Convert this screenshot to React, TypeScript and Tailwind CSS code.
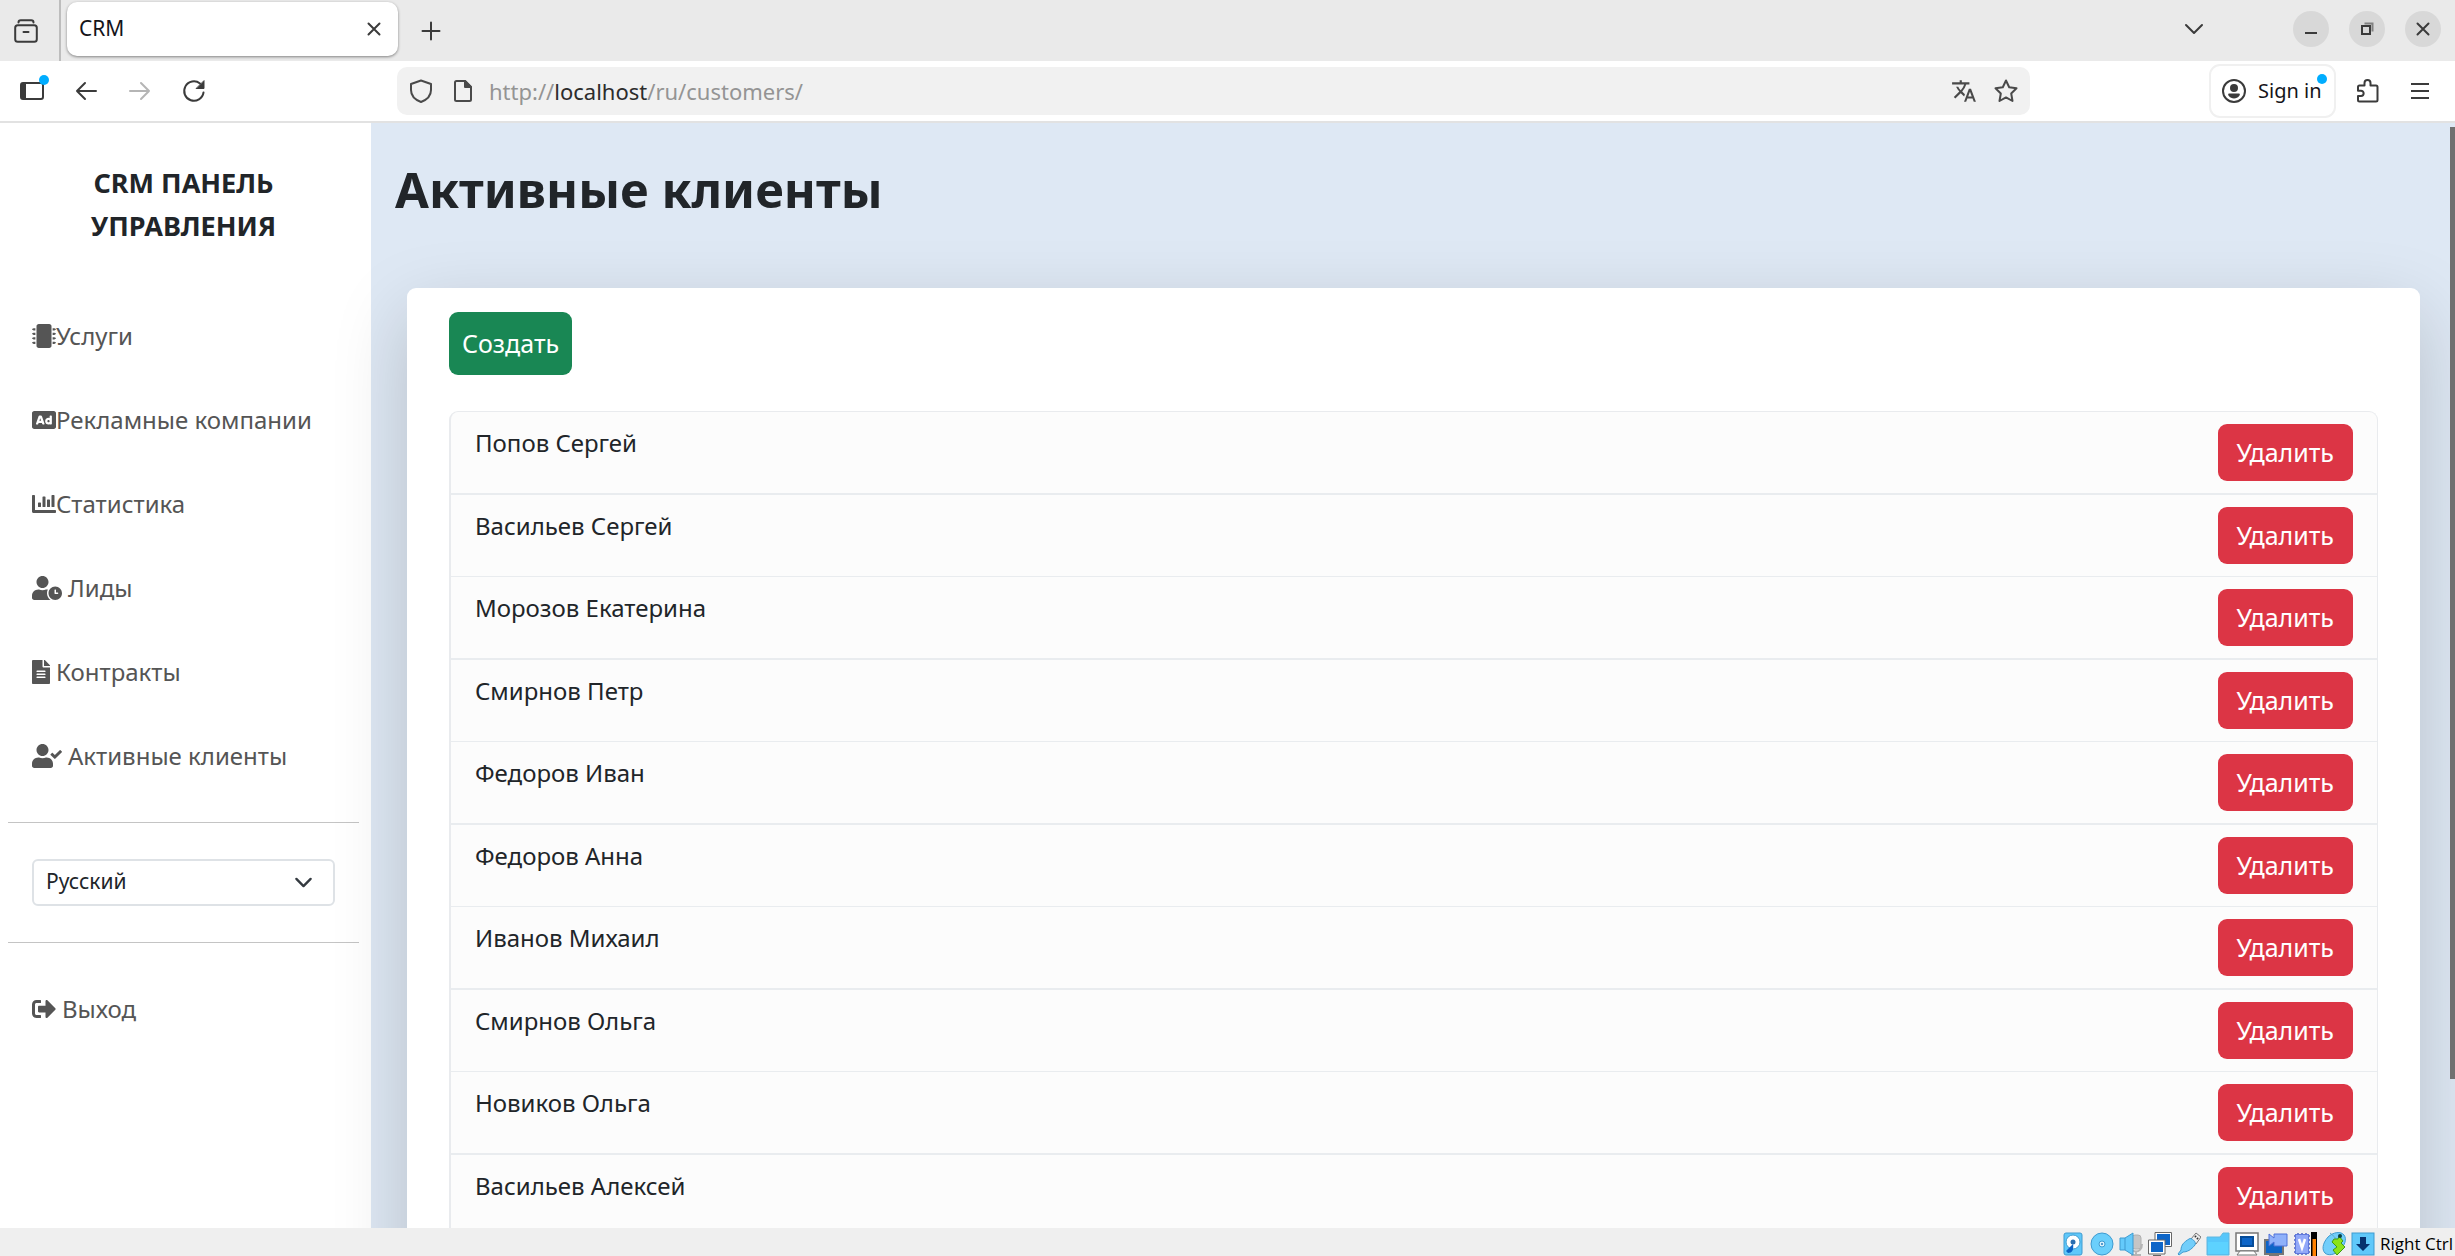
import type { ReactNode } from 'react';
import {
  FaAd,
  FaChartBar,
  FaFileAlt,
  FaMicrochip,
  FaSignOutAlt,
  FaUserCheck,
  FaUserClock,
} from 'react-icons/fa';
import { MdTranslate } from 'react-icons/md';

const customers = [
  'Попов Сергей',
  'Васильев Сергей',
  'Морозов Екатерина',
  'Смирнов Петр',
  'Федоров Иван',
  'Федоров Анна',
  'Иванов Михаил',
  'Смирнов Ольга',
  'Новиков Ольга',
  'Васильев Алексей',
];

const navItems = [
  { label: 'Услуги', icon: <FaMicrochip />, spaced: false },
  { label: 'Рекламные компании', icon: <FaAd />, spaced: false },
  { label: 'Статистика', icon: <FaChartBar />, spaced: false },
  { label: 'Лиды', icon: <FaUserClock className="w-[30px]" />, spaced: true },
  { label: 'Контракты', icon: <FaFileAlt className="w-[18px]" />, spaced: true },
  { label: 'Активные клиенты', icon: <FaUserCheck className="w-[30px]" />, spaced: true },
];

function Icon({ children, className = '' }: { children: ReactNode; className?: string }) {
  return (
    <svg
      viewBox="0 0 24 24"
      width="24"
      height="24"
      fill="none"
      stroke="currentColor"
      strokeWidth="2"
      strokeLinecap="round"
      strokeLinejoin="round"
      className={className}
    >
      {children}
    </svg>
  );
}

function TabStrip() {
  return (
    <div className="flex h-[61px] items-center bg-[#eaeaea] text-[#3b3b3b]">
      <button type="button" aria-label="Firefox View" className="flex w-[59px] justify-center pr-[7px]">
        <Icon>
          <rect x="1.2" y="6.2" width="21.6" height="16.6" rx="2.5" />
          <path d="M4.5 3.5c0-1.5.8-2.3 2.3-2.3h10.4c1.5 0 2.3.8 2.3 2.3M9.5 13h5" />
        </Icon>
      </button>
      <div className="h-full w-[2px] bg-[#bdbdbd]" />
      <div className="mb-1 ml-[6px] flex h-[54px] w-[331px] items-center justify-between rounded-[10px] bg-white pl-3 pr-3 shadow-[0_1px_3px_rgba(0,0,0,0.45)]">
        <span className="text-[21px] text-[#15141a]">CRM</span>
        <button type="button" aria-label="Close tab">
          <Icon>
            <path d="m6.5 6.5 11 11m0-11-11 11" />
          </Icon>
        </button>
      </div>
      <button type="button" aria-label="New tab" className="ml-[21px]">
        <Icon>
          <path d="M12 3.5v17M3.5 12h17" />
        </Icon>
      </button>
      <button type="button" aria-label="List all tabs" className="mb-1 ml-auto mr-[87px]">
        <Icon>
          <path d="m4 8 8 8 8-8" />
        </Icon>
      </button>
      <div className="mb-1 mr-[14px] flex gap-5">
        <button type="button" aria-label="Minimize" className="flex size-9 items-center justify-center rounded-full bg-[#d8d8d8]">
          <Icon>
            <path d="M6 16h12" strokeLinecap="butt" />
          </Icon>
        </button>
        <button type="button" aria-label="Restore" className="flex size-9 items-center justify-center rounded-full bg-[#d8d8d8]">
          <Icon>
            <rect x="7" y="9" width="8" height="8" strokeLinejoin="miter" />
            <path d="M9.5 6.5h8v8" strokeLinecap="butt" strokeLinejoin="miter" opacity=".55" />
          </Icon>
        </button>
        <button type="button" aria-label="Close" className="flex size-9 items-center justify-center rounded-full bg-[#d8d8d8]">
          <Icon>
            <path d="m6.5 6.5 11 11m0-11-11 11" />
          </Icon>
        </button>
      </div>
    </div>
  );
}

function Toolbar() {
  return (
    <div className="flex h-[62px] items-center border-b-2 border-[#e2e2e2] bg-white text-[#3b3b3b]">
      <div className="flex w-[397px] items-center gap-[30px] pl-5">
        <button type="button" aria-label="Sidebars" className="relative">
          <Icon>
            <rect x="1" y="4" width="22" height="16" rx="2" />
            <path d="M1.5 4.5H6v15H1.5z" fill="currentColor" stroke="none" />
            <path d="M5 4v16" />
          </Icon>
          <span className="absolute -right-[5px] -top-1 size-[10px] rounded-full bg-[#00adff]" />
        </button>
        <button type="button" aria-label="Back">
          <Icon>
            <path d="M22 12H3m8-8-8 8 8 8" />
          </Icon>
        </button>
        <button type="button" aria-label="Forward" disabled className="text-[#b5b5b5]">
          <Icon>
            <path d="M2 12h19m-8-8 8 8-8 8" />
          </Icon>
        </button>
        <button type="button" aria-label="Reload">
          <Icon>
            <path d="M21.5 13.5A9.700 9.700 0 1 1 18 4.500" />
            <path d="M22 2v7.500h-7.500z" fill="currentColor" strokeWidth="1" />
          </Icon>
        </button>
      </div>
      <div className="flex h-12 flex-1 items-center rounded-[10px] bg-[#f1f1f1] px-3 text-[#4a4a4a]">
        <Icon>
          <path d="M12 1.5 22 5v6c0 6-4 9.700-10 12C6 20.700 2 17 2 11V5z" />
        </Icon>
        <Icon className="ml-[18px]">
          <path d="M5.500 2H14l6 6v12.500c0 1-.5 1.500-1.500 1.500h-13c-1 0-1.500-.5-1.500-1.500v-17C4 2.500 4.500 2 5.500 2z" />
          <path d="M14 2v6h6z" fill="currentColor" />
        </Icon>
        <div className="ml-[14px] text-[22px] text-[#949494]">
          http://<span className="text-[#2c2c2c]">localhost</span>/ru/customers/
        </div>
        <button type="button" aria-label="Translate page" className="ml-auto mr-[17px]">
          <MdTranslate className="size-[26px]" />
        </button>
        <button type="button" aria-label="Bookmark">
          <Icon>
            <path d="m12 1.500 3.200 6.800 7.300 1-5.300 5.200 1.300 7.500-6.500-3.600L5.500 22l1.300-7.500L1.500 9.300l7.300-1z" />
          </Icon>
        </button>
      </div>
      <button
        type="button"
        className="relative ml-[179px] flex h-[54px] w-[127px] items-center gap-3 rounded-[11px] border-2 border-[#f0f0f0] pl-[11px]"
      >
        <Icon>
          <circle cx="12" cy="12" r="11" />
          <circle cx="12" cy="9" r="3" fill="currentColor" />
          <path d="M7 14.500h10c1 0 1 1 .6 1.800C16 19 14 19.500 12 19.500S8 19 6.400 16.300C6 15.500 6 14.500 7 14.500z" fill="currentColor" stroke="none" />
        </Icon>
        <span className="whitespace-nowrap text-[20px] text-[#15141a]">Sign in</span>
        <span className="absolute right-[7px] top-2 size-[10px] rounded-full bg-[#00adff]" />
      </button>
      <button type="button" aria-label="Extensions" className="ml-5">
        <Icon>
          <path d="M2 8c0-1 .5-1.500 1.500-1.500h5V4a3 3 0 0 1 6 0v2.500H20c1 0 1.500.5 1.500 1.500v13c0 1-.5 1.500-1.500 1.500H3.500c-1 0-1.500-.5-1.500-1.500v-4h3a2.600 2.600 0 0 0 0-5.300H2z" />
        </Icon>
      </button>
      <button type="button" aria-label="Menu" className="ml-7 mr-[23px]">
        <Icon>
          <path d="M3 5h18M3 12h18M3 19h18" strokeLinecap="butt" />
        </Icon>
      </button>
    </div>
  );
}

function Sidebar() {
  return (
    <aside className="w-[371px] shrink-0 bg-white pl-2 pr-3 pt-[38px] text-[24px] text-[#555]">
      <h2 className="px-12 text-center text-[27px] font-bold leading-[43px] text-[#212529]">CRM ПАНЕЛЬ УПРАВЛЕНИЯ</h2>
      <nav className="mt-[47px] px-6">
        {navItems.map((item) => (
          <a
            key={item.label}
            href="#"
            className={`flex h-[84px] items-center whitespace-nowrap ${item.spaced ? 'gap-[6px]' : ''}`}
          >
            {item.icon}
            {item.label}
          </a>
        ))}
      </nav>
      <hr className="mt-6 border-[#c4c4c4]" />
      <div className="relative mx-6 my-9">
        <select
          aria-label="Язык"
          className="h-[47px] w-full appearance-none rounded-md border-2 border-[#dee2e6] bg-white px-3 pb-1 text-[21px] leading-8 text-[#212529]"
        >
          <option>Русский</option>
        </select>
        <svg
          viewBox="0 0 16 16"
          className="pointer-events-none absolute right-[22px] top-[14px] size-[19px]"
          fill="none"
          stroke="#343a40"
          strokeWidth="2"
          strokeLinecap="round"
          strokeLinejoin="round"
        >
          <path d="m2 5 6 6 6-6" />
        </svg>
      </div>
      <hr className="border-[#c4c4c4]" />
      <a href="#" className="mt-6 flex h-[84px] items-center gap-[6px] px-6">
        <FaSignOutAlt />
        Выход
      </a>
    </aside>
  );
}

function CustomerList() {
  return (
    <ul className="rounded-t-[9px] border-l-2 border-r border-t border-[#e9ebee] bg-[#fcfcfc]">
      {customers.map((name) => (
        <li
          key={name}
          className="flex items-start justify-between border-[#e9ecef] py-3 pl-6 pr-6 odd:border-b-2 even:border-b"
        >
          <a href="#" className="text-[24px] leading-[38px] text-[#212529]">
            {name}
          </a>
          <button type="button" className="h-[57px] rounded-[9px] bg-[#dc3545] px-[19px] text-white">
            Удалить
          </button>
        </li>
      ))}
    </ul>
  );
}

/* VM window status icons */
const statusIcons = [
  <>
    <rect x="3" y="1" width="18" height="22" rx="2" fill="#5fc8fa" />
    <circle cx="12" cy="10" r="7" fill="#fff" />
    <circle cx="12" cy="10" r="2.500" fill="#2a6db0" stroke="none" />
    <path d="m12 12-7 7 2 2c4 0 6-3 5-9z" fill="#0b62c4" stroke="none" />
  </>,
  <>
    <circle cx="12" cy="12" r="11" fill="#6bcffb" />
    <circle cx="12" cy="12" r="3" fill="#d8f0fb" />
    <circle cx="12" cy="12" r="1" fill="#2a7fc0" stroke="none" />
  </>,
  <>
    <rect x="13" y="3" width="9" height="14" rx="3" fill="#c5c5c5" stroke="#b0b0b0" />
    <path d="M11 12c0 10 12 10 12 0M17 19v4M12 23h10" stroke="#b5b5b5" strokeWidth="2" />
    <path d="M1 6h5l8-5v22l-8-5H1z" fill="#64cafb" />
    <path d="M6 6v12" />
  </>,
  <>
    <path d="M8 1h15v13H8z" fill="#0d65c8" stroke="#fff" strokeWidth="2" />
    <path d="M7 .5h16.500v14H7z" stroke="#666" />
    <path d="M2 9h14v12H2z" fill="#0d65c8" stroke="#fff" strokeWidth="2" />
    <path d="M.5 8h16.500v14H.5zM5 23.500h8" stroke="#666" />
  </>,
  <>
    <path d="m14 7 5-6 5 4-5 7z" fill="#eee" stroke="#777" />
    <path d="m18 4 1 1m1 1 1 1" stroke="#333" strokeWidth="2" />
    <path d="M12 7c2-2 8 3 6 6-4 5-8 7-12 7l-4 3-1-1 3-4c0-5 3-8 8-11z" fill="#72cefa" />
  </>,
  <>
    <path d="M1 5h13l3-4h6v22H1z" fill="#57c7fb" stroke="#5eb7e0" />
    <path d="M2 10h20v12H2z" fill="#5dd2ff" stroke="none" />
  </>,
  <>
    <path d="M1 1h22v18H1z" fill="#fff" stroke="#777" strokeWidth="1.500" />
    <path d="M6 5h12v9H6z" fill="#0d65c8" stroke="#064c99" strokeWidth="2" />
    <path d="M5 19h14l3 4H2z" fill="#fff" stroke="#777" />
  </>,
  <>
    <path d="M1 8h18v14H1z" fill="#0d65c8" stroke="#777" strokeWidth="2" />
    <path d="M5 2 10 6V2h13v12H10v-4l-5 4z" fill="#8fb1fa" stroke="#4e70d8" />
    <path d="M5 23.500h10" stroke="#777" />
  </>,
  <>
    <path d="M1 4h16M1 8h16M1 12h16M1 16h16M1 20h16M5 1v22M9 1v22M13 1v22" stroke="#4c62c0" strokeWidth="1.500" />
    <rect x="2.500" y="2.500" width="13" height="19" fill="#91a8f8" stroke="#6079dc" />
    <path d="m6 7 3 9 3-9" stroke="#fff" strokeWidth="2.500" />
    <path d="M18 0h6v24h-6z" fill="#000" stroke="none" />
    <path d="M19.500 7h3.500v17h-3.500z" fill="#ff8000" stroke="none" />
  </>,
  <>
    <path d="M6 5c5-5 13-6 16-2s1 10-4 15-12 6-15 3-3-9 3-16z" fill="#72cefa" />
    <path d="M8 1c4 3 9 8 10 13" stroke="#5aa7c8" />
    <path d="m12 7 4 0 1-3 4 5-2 2 4 4-8 8-4-5 4-3-5-5z" fill="#8be31a" stroke="#3e9a18" />
    <circle cx="18" cy="4" r="2" fill="#064044" stroke="none" />
  </>,
  <>
    <rect x="1" y="1" width="22" height="22" fill="#5fc8fa" />
    <path d="M9 5h6v7h4l-7 7-7-7h4z" fill="#06316e" stroke="none" />
  </>,
];

function StatusBar() {
  return (
    <footer className="flex h-7 shrink-0 items-end justify-end gap-[5px] overflow-hidden bg-[#efefef] pr-[2px]">
      {statusIcons.map((shape, i) => (
        <svg key={i} viewBox="0 0 24 24" width="24" height="24" fill="none" stroke="#3f9bd0" className="shrink-0">
          {shape}
        </svg>
      ))}
      <span className="whitespace-nowrap font-['Open_Sans',sans-serif] text-[17px] leading-6 text-black">Right Ctrl</span>
    </footer>
  );
}

export default function App() {
  return (
    <div className="flex h-screen flex-col overflow-hidden font-['Noto_Sans',sans-serif]">
      <header className="shrink-0">
        <TabStrip />
        <Toolbar />
      </header>
      <div className="relative flex min-h-0 flex-1 overflow-hidden">
        <Sidebar />
        <main className="min-w-0 flex-1 bg-[#dee8f4] pl-9 pr-[35px] pt-7">
          <h1 className="-ml-3 text-[49px] font-bold leading-[76px] text-[#212529]">Активные клиенты</h1>
          <section className="mt-[61px] h-full rounded-[9px] bg-white px-[42px] pt-6 text-[25px] shadow-[0_25px_75px_rgba(0,0,0,0.175)]">
            <button type="button" className="mb-9 block h-[63px] rounded-[9px] bg-[#198754] px-[13px] text-white">
              Создать
            </button>
            <CustomerList />
          </section>
        </main>
        <div className="absolute right-0 top-1 h-[952px] w-[5px] bg-[#707070]" />
      </div>
      <StatusBar />
    </div>
  );
}
